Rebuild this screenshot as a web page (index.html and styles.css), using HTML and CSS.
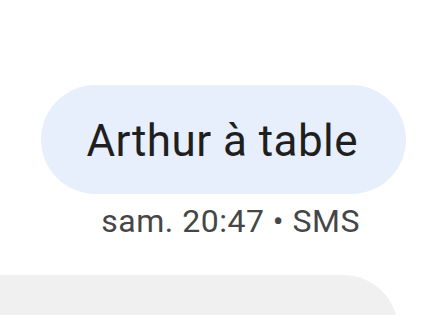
FILE: index.html
```html
<!DOCTYPE html>
<html lang="fr">
<head>
<meta charset="utf-8">
<link rel="stylesheet" href="styles.css">
</head>
<body>
<main class="thread">
  <div class="msg msg-out">
    <div class="bubble bubble-out">Arthur à table</div>
    <div class="meta">sam. 20:47 • SMS</div>
  </div>
  <div class="msg msg-in">
    <div class="bubble bubble-in">on mange dans le salon</div>
  </div>
</main>
</body>
</html>
```
FILE: styles.css
```css
html, body {
  margin: 0;
  padding: 0;
  background: #ffffff;
  overflow: hidden;
}
body {
  width: 428px;
  height: 315px;
  font-family: Roboto, "Noto Sans", sans-serif;
}
.thread {
  display: flex;
  flex-direction: column;
  padding-top: 85px;
  height: 315px;
  box-sizing: border-box;
  overflow: hidden;
}
.msg {
  display: flex;
  flex-direction: column;
  flex-shrink: 0;
}
.msg-out {
  align-items: flex-end;
  padding-right: 22px;
}
.bubble {
  font-size: 44px;
  color: #1f1f1f;
  box-sizing: border-box;
  height: 109px;
  white-space: nowrap;
}
.bubble-out {
  background: #e8effc;
  border-radius: 55px;
  padding: 4px 48px 0 45px;
  line-height: 105px;
  letter-spacing: 0.45px;
}
.meta {
  font-size: 32px;
  letter-spacing: 0.5px;
  color: #444746;
  margin-top: 9px;
  margin-right: 46px;
  line-height: 36px;
}
.msg-in {
  align-items: flex-start;
  margin-top: 36px;
}
.bubble-in {
  background: #f0f0f0;
  border-radius: 0 56px 56px 0;
  padding: 10px 56px 0 4px;
  width: 398px;
  line-height: 100px;
  overflow: hidden;
}
```
